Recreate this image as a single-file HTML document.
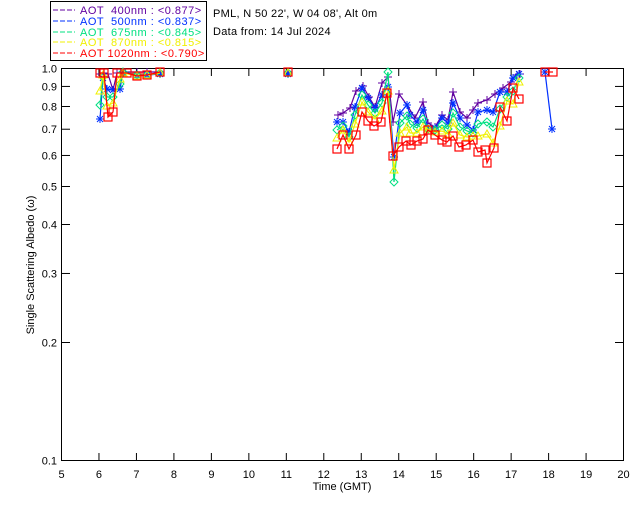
<!DOCTYPE html>
<html><head><meta charset="utf-8"><style>
html,body{margin:0;padding:0;background:#fff;width:640px;height:512px;overflow:hidden}
svg text{font-family:"Liberation Sans",sans-serif;font-size:11px}
</style></head><body>
<svg id="s" width="640" height="512" viewBox="0 0 640 512" xmlns="http://www.w3.org/2000/svg">
<rect x="50.5" y="1.5" width="156" height="59" fill="#fff" stroke="#000"/>
<g font-size="11" letter-spacing="0.5">
<line x1="53" y1="10" x2="75" y2="10" stroke="#6000a0" stroke-dasharray="5,2"/><text x="80" y="14" fill="#6000a0" xml:space="preserve">AOT  400nm : &lt;0.877&gt;</text>
<line x1="53" y1="21" x2="75" y2="21" stroke="#0030ff" stroke-dasharray="5,2"/><text x="80" y="25" fill="#0030ff" xml:space="preserve">AOT  500nm : &lt;0.837&gt;</text>
<line x1="53" y1="32" x2="75" y2="32" stroke="#00e080" stroke-dasharray="5,2"/><text x="80" y="36" fill="#00e080" xml:space="preserve">AOT  675nm : &lt;0.845&gt;</text>
<line x1="53" y1="42" x2="75" y2="42" stroke="#f0f000" stroke-dasharray="5,2"/><text x="80" y="46" fill="#f0f000" xml:space="preserve">AOT  870nm : &lt;0.815&gt;</text>
<line x1="53" y1="53" x2="75" y2="53" stroke="#ff0000" stroke-dasharray="5,2"/><text x="80" y="57" fill="#ff0000" xml:space="preserve">AOT 1020nm : &lt;0.790&gt;</text>
</g>
<text x="213" y="17" letter-spacing="0.3">PML, N 50 22', W 04 08', Alt 0m</text>
<text x="213" y="35" letter-spacing="0.3">Data from: 14 Jul 2024</text>
<rect x="61.5" y="68.5" width="562" height="392" fill="none" stroke="#000"/>
<g id="ax" stroke="#000"></g>
<g id="lab"></g>
<text x="342" y="490" text-anchor="middle">Time (GMT)</text>
<text transform="translate(34,265) rotate(-90)" text-anchor="middle">Single Scattering Albedo (ω)</text>
<g id="data"></g>
</svg>
<script>
var NS="http://www.w3.org/2000/svg",ax=document.getElementById('ax'),lab=document.getElementById('lab'),dg=document.getElementById('data');
function el(p,t,a,txt){var e=document.createElementNS(NS,t);for(var k in a)e.setAttribute(k,a[k]);if(txt)e.textContent=txt;p.appendChild(e);return e;}
for(var h=5;h<=20;h++){var x=61.5+(h-5)*37.47;if(h>5&&h<20){el(ax,'line',{x1:x,y1:460,x2:x,y2:453});el(ax,'line',{x1:x,y1:69,x2:x,y2:76});}
el(lab,'text',{x:x,y:478,'text-anchor':'middle'},String(h));}
[1,.9,.8,.7,.6,.5,.4,.3,.2,.1].forEach(function(v){var y=68.5-392*Math.log10(v);
if(v!=1&&v!=.1){el(ax,'line',{x1:62,y1:y,x2:70,y2:y});el(ax,'line',{x1:615,y1:y,x2:623,y2:y});}
el(lab,'text',{x:57,y:y+4,'text-anchor':'end'},v==1?'1.0':String(v));});
var P=[[100,74],[104,73],[108,74],[113,90],[117,73],[125,72],[137,72],[147,72],[160,72],[288,72],[338,115],[343,113],[350,108],[356,91],[363,86],[369,97],[375,107],[382,83],[388,77],[393,122],[399,94],[407,105],[415,118],[423,102],[428,123],[435,127],[442,115],[448,120],[453,92],[460,112],[467,118],[473,110],[478,103],[487,100],[495,94],[503,88],[511,82],[517,75],[520,74]];
var B=[[100,119],[103,78],[107,89],[113,90],[120,89],[123,72],[137,75],[147,75],[160,74],[288,74],[337,122],[343,122],[349,132],[355,107],[362,88],[368,98],[375,108],[382,95],[388,87],[394,157],[400,113],[407,105],[410,115],[417,122],[423,110],[428,128],[435,128],[442,118],[448,123],[453,103],[460,118],[467,125],[473,130],[478,112],[487,110],[493,112],[500,92],[507,92],[513,78],[519,74]];
var R=[[100,73],[104,73],[108,117],[113,112],[117,73],[127,73],[137,76],[147,75],[160,72],[288,72],[337,149],[343,135],[349,149],[356,135],[362,112],[368,121],[374,126],[381,122],[387,93],[393,156],[399,147],[406,141],[411,145],[417,141],[423,139],[428,130],[435,135],[442,140],[447,142],[453,136],[459,147],[466,145],[473,140],[478,152],[485,150],[487,163],[494,148],[500,107],[507,121],[513,88],[519,99]];
var G=B.map(function(p,i){var r=R[i]||p;return [p[0],Math.round(p[1]*0.7+r[1]*0.3)];});G[19][1]=182;G[18][1]=72;
var Y=B.map(function(p,i){var r=R[i]||p;return [p[0],Math.round(p[1]*0.4+r[1]*0.6)];});Y[19][1]=170;
function seg(pts){var s=[],c=[];pts.forEach(function(p,i){if(i>0&&p[0]-pts[i-1][0]>40){s.push(c);c=[];}c.push(p);});s.push(c);return s;}
function draw(pts,col,mk){seg(pts).forEach(function(c){el(dg,'polyline',{points:c.join(' '),fill:'none',stroke:col,'stroke-width':1.2});});
pts.forEach(function(p){var x=p[0],y=p[1];
if(mk=='plus'){el(dg,'path',{d:'M'+(x-4)+' '+y+'h8M'+x+' '+(y-4)+'v8',stroke:col,fill:'none'});}
else if(mk=='star'){el(dg,'path',{d:'M'+(x-4)+' '+y+'h8M'+x+' '+(y-4)+'v8M'+(x-3)+' '+(y-3)+'l6 6M'+(x+3)+' '+(y-3)+'l-6 6',stroke:col,fill:'none'});}
else if(mk=='dia'){el(dg,'path',{d:'M'+x+' '+(y-4)+'l4 4l-4 4l-4 -4z',stroke:col,fill:'none'});}
else if(mk=='tri'){el(dg,'path',{d:'M'+x+' '+(y-4)+'l4 7h-8z',stroke:col,fill:'none'});}
else {el(dg,'rect',{x:x-4,y:y-4,width:8,height:8,stroke:col,fill:'none','stroke-width':1.2});}});}
draw(P,'#6000a0','plus');draw(B,'#0030ff','star');draw(G,'#00e080','dia');draw(Y,'#f0f000','tri');draw(R,'#ff0000','sq');
draw([[545,72],[552,129]],'#0030ff','star');draw([[545,72],[553,72]],'#ff0000','sq');
</script>
</body></html>
